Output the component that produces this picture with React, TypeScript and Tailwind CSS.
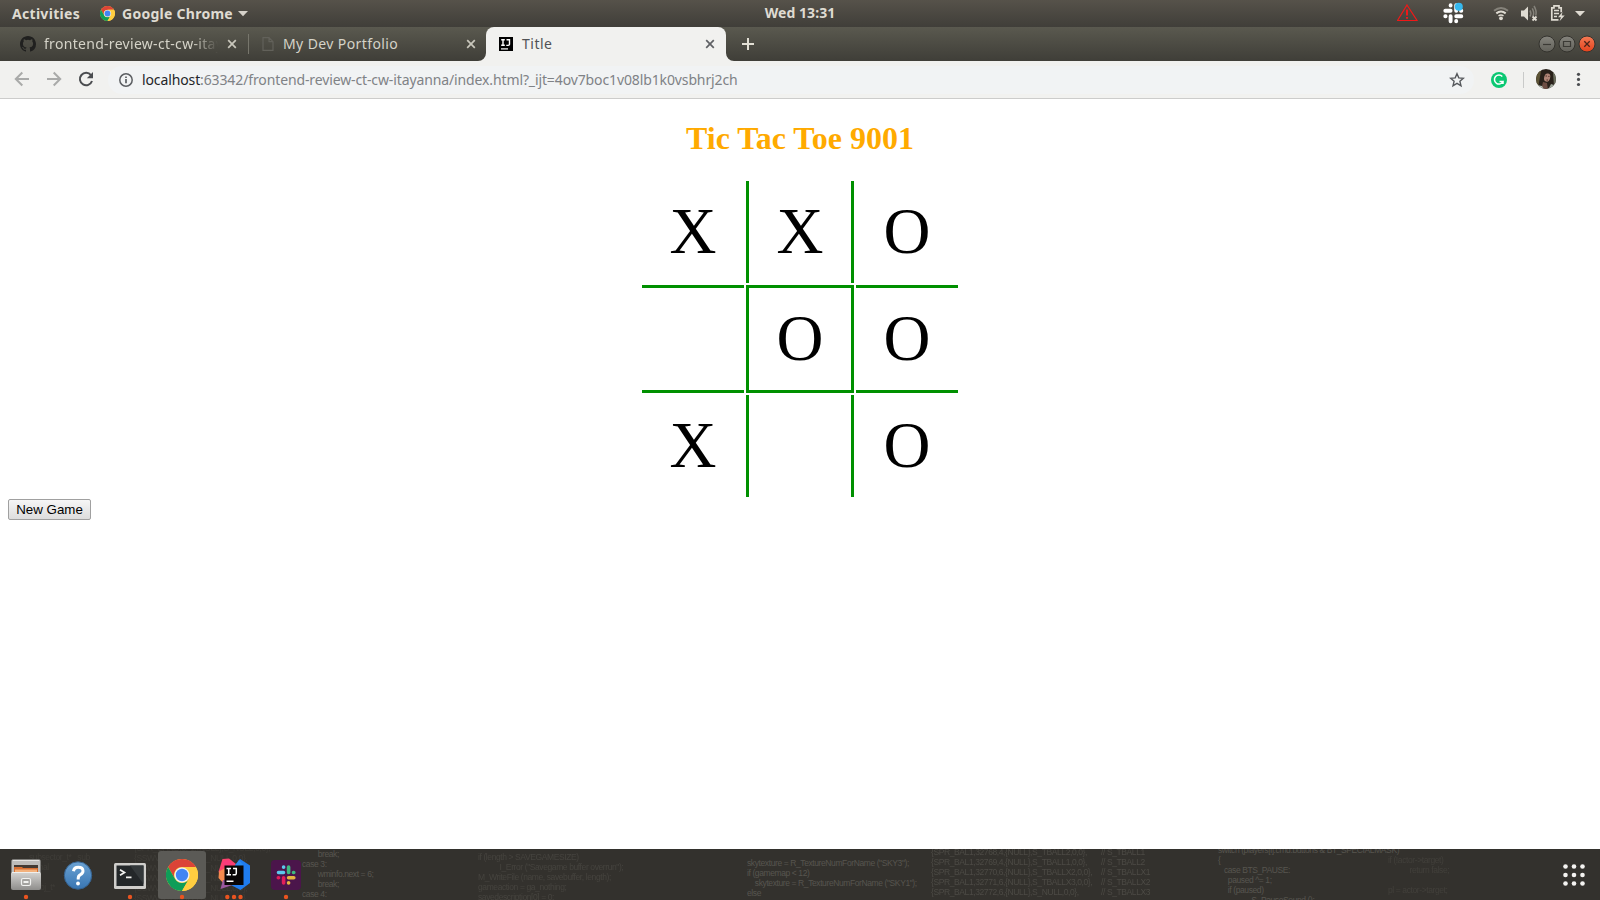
import type { ReactNode } from "react";

const ui = "font-['Noto_Sans','Open_Sans',sans-serif]";

function ChromeLogo({ size }: { size: number }) {
  return (
    <svg width={size} height={size} viewBox="-16 -16 32 32">
      <circle r="16" fill="#ffcd40" />
      <path d="M-13.86-8A16 16 0 0 1 13.86-8H0A8 8 0 0 0-6.93 4Z" fill="#db4437" />
      <path d="M-13.86-8-6.93 4A8 8 0 0 0 6.93 4L0 16A16 16 0 0 1-13.86-8Z" fill="#0f9d58" />
      <path d="M13.86-8H0A8 8 0 0 1 6.93 4L0 16A16 16 0 0 0 13.86-8Z" fill="#ffcd40" />
      <circle r="7.6" fill="#f1f1f1" />
      <circle r="6.2" fill="#4285f4" />
    </svg>
  );
}

function TopBar() {
  return (
    <div className="flex h-[27px] items-center justify-between bg-linear-to-b from-[#56524a] to-[#403e39] text-[14px] font-bold text-[#dfdbd2]">
      <div className="flex w-[700px] items-center pl-[12px]">
        <span className="w-[88px] tracking-[0.3px]">Activities</span>
        <ChromeLogo size={15} />
        <span className="ml-[7px] w-[112px] tracking-[0.27px] whitespace-nowrap">Google Chrome</span>
        <svg className="ml-[3px]" width="12" height="6" viewBox="0 0 12 6">
          <path d="M1 0h10L6 5.2Z" fill="#d6d2ca" />
        </svg>
      </div>
      <span className="mt-[-2px] tracking-[0.05px] whitespace-nowrap">Wed 13:31</span>
      <div className="flex w-[700px] justify-end">
        <svg width="203" height="27" viewBox="1397 0 203 27">
          <path d="M1407 5 1417 20.5H1397.5Z" fill="none" stroke="#f01818" strokeWidth="1.2" />
          <path d="M1407 9.5v6M1407 17v1.8" stroke="#f01818" strokeWidth="2" />
          <g stroke="#fff" strokeWidth="3.9" strokeLinecap="round" fill="none">
            <path d="M1450.600 5.300v.3M1445.300 10.700h5.300M1456.200 5.300v5.400M1461 10.700h.3M1456.200 16.200h5.100M1456.200 21v.3M1450.600 16.200v5.100M1445.300 16.200h.3" />
          </g>
          <circle cx="1458.8" cy="6.800" r="4" fill="#35b8ee" />
          <g fill="none" strokeWidth="2">
            <path d="M1494 10.7q7-5.5 14 0" stroke="#85827a" />
            <path d="M1496.3 13.4q4.700-3.700 9.400 0" stroke="#dfdbd2" />
            <path d="M1498.500 15.800q2.500-1.800 5 0" stroke="#dfdbd2" strokeWidth="1.500" />
          </g>
          <circle cx="1501" cy="18.300" r="1.900" fill="#dfdbd2" />
          <path d="M1521 10.500h3l4-4v14l-4-4h-3Z" fill="#dfdbd2" />
          <g fill="none" stroke="#85827a" strokeWidth="1.500">
            <path d="M1530 10.500q1.800 3 0 6M1532.300 8.300q2.500 5 .5 8M1534 6q3 5 1.800 9.500" />
          </g>
          <path d="m1532.500 16.500 4 4m0-4-4 4" stroke="#dfdbd2" strokeWidth="1.800" />
          <g fill="none" stroke="#dfdbd2" strokeWidth="1.700">
            <path d="M1558.500 19.800h-6.700V7.800h2.200v-2h5v2h2.200v4.500" />
            <path d="M1554 10.500h5M1554 13.500h5M1554 16.500h3" strokeWidth="1.500" />
          </g>
          <path d="m1562.500 12-4.500 5.200h3l-1.500 4 5.200-5.700h-3Z" fill="#dfdbd2" />
          <path d="M1575 11h10l-5 5.200Z" fill="#dfdbd2" />
        </svg>
      </div>
    </div>
  );
}

function Cross({ color }: { color: string }) {
  return (
    <svg width="10" height="10" viewBox="0 0 10 10" className="shrink-0">
      <path d="m1.200 1.200 7.600 7.600m0-7.600-7.600 7.600" stroke={color} strokeWidth="1.700" />
    </svg>
  );
}

function WindowButton({ close, children }: { close?: boolean; children: ReactNode }) {
  return (
    <svg width="18" height="18" viewBox="-9 -9 18 18">
      <defs>
        <linearGradient id={close ? "wc" : "wb"} x2="0" y2="1">
          <stop stopColor={close ? "#f47b55" : "#85847d"} />
          <stop offset="1" stopColor={close ? "#e4421c" : "#62615a"} />
        </linearGradient>
      </defs>
      <circle r="8" fill={close ? "url(#wc)" : "url(#wb)"} stroke="#34332e" />
      {children}
    </svg>
  );
}

function TabStrip() {
  return (
    <div className="flex h-[34px] bg-linear-to-b from-[#5a594f] to-[#3f3e38] text-[14px] text-[#d5d3c8]">
      <div className="flex w-[248px] items-center pl-[20px]">
        <svg width="16" height="16" viewBox="0 0 16 16" className="shrink-0">
          <path
            fill="#20201f"
            d="M8 0C3.580 0 0 3.580 0 8c0 3.540 2.290 6.530 5.470 7.590.4.070.55-.17.55-.38 0-.19-.01-.82-.01-1.490-2.010.37-2.530-.49-2.690-.94-.09-.23-.48-.94-.82-1.130-.28-.15-.68-.52-.01-.53.63-.01 1.080.58 1.230.82.72 1.210 1.870.87 2.330.66.07-.52.28-.87.51-1.070-1.780-.2-3.640-.89-3.640-3.950 0-.87.31-1.590.82-2.150-.08-.2-.36-1.020.08-2.120 0 0 .67-.21 2.200.82a7.600 7.600 0 0 1 4 0c1.530-1.040 2.200-.82 2.200-.82.44 1.100.16 1.920.08 2.120.51.56.82 1.270.82 2.150 0 3.070-1.870 3.750-3.650 3.950.29.25.54.73.54 1.480 0 1.070-.01 1.930-.01 2.200 0 .21.15.46.55.38A8 8 0 0 0 16 8c0-4.420-3.580-8-8-8Z"
          />
        </svg>
        <span className="mt-[-2px] ml-[8px] w-[174px] overflow-hidden mask-r-from-85% mask-r-to-100% tracking-[0.3px] whitespace-nowrap">
          frontend-review-ct-cw-itayanna
        </span>
        <span className="ml-[9px]">
          <Cross color="#c9c7bc" />
        </span>
      </div>
      <div className="flex w-[238px] items-center">
        <div className="h-[20px] w-px bg-[#77766c]" />
        <svg width="12" height="14" viewBox="0 0 12 14" className="ml-[13px]">
          <path d="M1 .7h6l4 4v8.600H1ZM7 .7v4h4" fill="none" stroke="#62615a" strokeWidth="1.200" />
        </svg>
        <span className="mt-[-2px] ml-[9px] w-[183px] tracking-[0.4px]">My Dev Portfolio</span>
        <Cross color="#c9c7bc" />
      </div>
      <div className="relative flex w-[240px] items-center rounded-t-[8px] bg-[#f1f1ef] text-[#505255]">
        <svg className="absolute bottom-0 -left-[8px]" width="8" height="8">
          <path d="M8 0A8 8 0 0 1 0 8H8Z" fill="#f1f1ef" />
        </svg>
        <svg className="absolute -right-[8px] bottom-0" width="8" height="8">
          <path d="M0 0A8 8 0 0 0 8 8H0Z" fill="#f1f1ef" />
        </svg>
        <svg width="14" height="14" viewBox="0 0 14 14" className="ml-[13px]">
          <path d="M0 0h14v14H0Z" />
          <path d="M2.200 2.700h3.600M4 2.700v5.600M2.200 8.300h3.600M7.500 2.700H10.500V7Q10.500 8.500 9 8.400H7.300" fill="none" stroke="#fff" strokeWidth="1.400" />
          <path d="M2 11.300h7v1.200H2Z" fill="#fff" />
        </svg>
        <span className="mt-[-2px] ml-[9px] w-[183px] tracking-[0.5px]">Title</span>
        <Cross color="#5f6165" />
      </div>
      <div className="flex flex-1 items-center justify-between pr-[4px]">
        <svg width="14" height="14" viewBox="0 0 14 14" className="ml-[15px]">
          <path d="M7 1v12M1 7h12" stroke="#e2dfd4" strokeWidth="2" />
        </svg>
        <div className="flex gap-[2px]">
          <WindowButton>
            <path d="M-4 .5h8" stroke="#3b3a35" strokeWidth="1.200" />
          </WindowButton>
          <WindowButton>
            <path d="M-3.500-2.500h7v5h-7Z" fill="none" stroke="#3b3a35" strokeWidth="1.200" />
          </WindowButton>
          <WindowButton close>
            <path d="m-2.700-2.700 5.400 5.400m0-5.400-5.400 5.400" stroke="#4b2419" strokeWidth="1.300" />
          </WindowButton>
        </div>
      </div>
    </div>
  );
}

function Toolbar() {
  return (
    <div className="flex h-[38px] items-center border-b border-[#cccccb] bg-[#f1f1ef]">
      <svg width="108" height="37" viewBox="0 61 108 37" fill="none" strokeWidth="2">
        <path d="M29 79H16M22.300 72.500 15.800 79l6.500 6.500" stroke="#a9aaa9" />
        <path d="M47 79h13M53.700 72.500 60.200 79l-6.500 6.500" stroke="#a9aaa9" />
        <path d="M91 75.200A6.200 6.200 0 1 0 92 81" stroke="#4b4d50" />
        <path d="M93 72v6.200h-6.200Z" fill="#4b4d50" />
      </svg>
      <div className="flex h-[28px] w-[1366px] items-center rounded-full bg-[#f1f3f4] pl-[11px]">
        <svg width="14" height="14" viewBox="0 0 14 14" fill="none" stroke="#5b5e62">
          <circle cx="7" cy="7" r="6.200" strokeWidth="1.500" />
          <path d="M7 6v4.300M7 3.400v1.600" strokeWidth="1.700" />
        </svg>
        <span className="ml-[9px] flex-1 text-[14px] tracking-[-0.12px] text-[#7f8286]">
          <span className="text-[#242528]">localhost</span>:63342/frontend-review-ct-cw-itayanna/index.html?_ijt=4ov7boc1v08lb1k0vsbhrj2ch
        </span>
        <svg width="16" height="16" viewBox="0 0 16 16" className="mr-[9px]">
          <path d="m8 1.700 1.800 4.200 4.600.4-3.500 3 1.100 4.500L8 11.400l-4 2.400 1.100-4.500-3.500-3 4.600-.4Z" fill="none" stroke="#55585c" strokeWidth="1.400" />
        </svg>
      </div>
      <svg width="126" height="37" viewBox="1474 61 126 37">
        <circle cx="1499" cy="80" r="8" fill="#0bc872" />
        <path d="M1502.300 76.500A4.500 4.500 0 1 0 1503 81.500H1499.500M1503 81.300V84" fill="none" stroke="#fff" strokeWidth="1.500" />
        <path d="M1523.500 72v16" stroke="#c9cac9" />
        <clipPath id="av"><circle cx="1546" cy="79" r="10" /></clipPath>
        <g clipPath="url(#av)">
          <path d="M1536 69h20v20h-20Z" fill="#29211a" />
          <path d="M1536 71h5l-3 17h-2Z" fill="#5c5335" />
          <path d="M1553 72l4 1v13l-3 1Z" fill="#6b6e5d" />
          <ellipse cx="1547.300" cy="77.500" rx="3" ry="4.200" fill="#b08577" transform="rotate(15 1547 77)" />
          <path d="M1543 82l4 1 1 7h-7Z" fill="#6d4d43" />
          <path d="M1537 85l5 1 2 4h-7Z" fill="#b6c3b9" />
          <path d="M1551 84l3 1-3 5h-3Z" fill="#9fa79b" />
          <path d="M1545.500 76h1.500m1.300.4h1.200M1546.500 80h1.500" stroke="#513027" />
        </g>
        <g fill="#4b4d50">
          <circle cx="1578.500" cy="74.300" r="1.600" />
          <circle cx="1578.500" cy="79.400" r="1.600" />
          <circle cx="1578.500" cy="84.500" r="1.600" />
        </g>
      </svg>
    </div>
  );
}

const cells = [
  ["X", ""],
  ["X", "border-x-[3px]"],
  ["O", ""],
  ["", "border-y-[3px]"],
  ["O", "border-[3px]"],
  ["O", "border-y-[3px]"],
  ["X", ""],
  ["", "border-x-[3px]"],
  ["O", ""],
];

function Game() {
  return (
    <main className="h-[750px] bg-white px-[8px] pt-[21px] font-['Liberation_Serif',serif] text-black">
      <h1 className="text-center text-[32px] leading-[37px] font-bold text-[#ffaa00]">Tic Tac Toe 9001</h1>
      <div className="mx-auto mt-[24px] grid w-[316px] grid-cols-[102px_108px_102px] grid-rows-[102px_108px_102px] gap-[2px]">
        {cells.map(([mark, edge], i) => (
          <div key={i} className={`flex items-center justify-center border-[#009000] pb-[2px] text-[65px] leading-[64px] ${edge}`}>
            {mark}
          </div>
        ))}
      </div>
      <button className="mt-[2px] flex h-[21px] w-[83px] items-center justify-center rounded-[2px] border border-[#a0a0a0] bg-linear-to-b from-[#f6f6f6] to-[#dddddd] font-['Liberation_Sans',sans-serif] text-[13.333px] whitespace-nowrap">
        New Game
      </button>
    </main>
  );
}

function DockItem({ dots = [], active, children }: { dots?: number[]; active?: boolean; children: ReactNode }) {
  return (
    <svg width="52" height="51" viewBox="0 0 52 51">
      {active && <rect x="2" y="2" width="48" height="48" rx="3" fill="#5b5a56" />}
      {children}
      {dots.map((x) => (
        <circle key={x} cx={x} cy="48" r="2.200" fill="#ea5420" />
      ))}
    </svg>
  );
}

const code: [string, string][] = [
  ["left-[29px] top-[3px] opacity-30", "subsector_t*   sub\nsignal\n\nmobj_t*"],
  ["left-[134px] top-[-6px] opacity-30", "{SPR_CAND,0,-1,{NULL},S_NULL,0,0},\n{SSWV,0,4,{NULL},S_NULL,0,0},\n{SSWV,1,4,{NULL},S_NULL,0,0},\n{SSWV,2,3,{NULL},S_NULL,0,0},\n{SSWV,3,3,{NULL},S_NULL,0,0},\n{SSWV,4,3,{NULL},S_NULL,0,0},"],
  ["left-[302px] top-[0px]", "        break;\ncase 3:\n        wminfo.next = 6;\n        break;\ncase 4:"],
  ["left-[478px] top-[3px] opacity-50", "if (length > SAVEGAMESIZE)\n           I_Error (\"Savegame buffer overrun\");\nM_WriteFile (name, savebuffer, length);\ngameaction = ga_nothing;\nsavedescription[0] = 0;"],
  ["left-[747px] top-[9px]", "skytexture = R_TextureNumForName (\"SKY3\");\nif (gamemap < 12)\n    skytexture = R_TextureNumForName (\"SKY1\");\nelse"],
  ["left-[931px] top-[-2px] opacity-70", "{SPR_BAL1,32768,4,{NULL},S_TBALL2,0,0},\n{SPR_BAL1,32769,4,{NULL},S_TBALL1,0,0},\n{SPR_BAL1,32770,6,{NULL},S_TBALLX2,0,0},\n{SPR_BAL1,32771,6,{NULL},S_TBALLX3,0,0},\n{SPR_BAL1,32772,6,{NULL},S_NULL,0,0},"],
  ["left-[1101px] top-[-2px] opacity-70", "// S_TBALL1\n// S_TBALL2\n// S_TBALLX1\n// S_TBALLX2\n// S_TBALLX3"],
  ["left-[1218px] top-[-4px]", "switch (players[i].cmd.buttons & BT_SPECIALMASK)\n{\n   case BTS_PAUSE:\n     paused ^= 1;\n     if (paused)\n                 S_PauseSound ();"],
  ["left-[1388px] top-[6px] opacity-40", "if (!actor->target)\n           return false;\n\npl = actor->target;"],
];

function Dock() {
  return (
    <div className="relative flex h-[51px] justify-between overflow-hidden bg-[#33312d]">
      <div className="absolute inset-0">
        {code.map(([place, text]) => (
          <pre key={place} className={`absolute font-['Liberation_Sans',sans-serif] text-[8.500px] leading-[10px] tracking-[-0.4px] text-[#57554f] ${place}`}>
            {text}
          </pre>
        ))}
      </div>
      <div className="relative flex">
        <DockItem dots={[26]}>
          <defs>
            <linearGradient id="cab" x2="0" y2="1">
              <stop stopColor="#d5d4d2" />
              <stop offset="1" stopColor="#8e8d8b" />
            </linearGradient>
          </defs>
          <rect x="11.500" y="10.500" width="29" height="18" rx="2" fill="#bdbcba" stroke="#7c7b78" />
          <path d="M12.500 11.500h27" stroke="#e4e3e1" />
          <path d="M14 16h24v8H14Z" fill="#443a33" />
          <path d="M14 18h8l1 1h15v5H14Z" fill="#d66f32" />
          <path d="M15 20.500h22v2.500H15Z" fill="#f3b17c" />
          <rect x="11" y="23" width="30" height="18" rx="2" fill="url(#cab)" />
          <path d="M12 23.500h28" stroke="#efefed" />
          <rect x="21.500" y="29.500" width="9" height="7" rx="1.500" fill="#a3a29f" stroke="#f2f2f0" strokeWidth="1.200" />
          <path d="M23.500 33h5" stroke="#f2f2f0" strokeWidth="2" />
        </DockItem>
        <DockItem>
          <defs>
            <linearGradient id="help" x2="0" y2="1">
              <stop stopColor="#6ba2d3" />
              <stop offset="1" stopColor="#3875b2" />
            </linearGradient>
          </defs>
          <circle cx="26" cy="26.500" r="13.700" fill="url(#help)" stroke="#35618e" />
          <path d="M21.500 22.200q.5-4 4.700-4 4.800 0 4.800 3.700 0 2.200-2.600 3.700-2.200 1.200-2.200 3.800v1" fill="none" stroke="#fff" strokeWidth="3" />
          <circle cx="26" cy="34.500" r="1.900" fill="#fff" />
        </DockItem>
        <DockItem dots={[26]}>
          <rect x="10" y="14" width="32" height="26" rx="1.500" fill="#cfcecb" />
          <path d="M12.500 16.500h27v20.500h-27Z" fill="#232729" />
          <path d="M26 16.500h13.500V35Z" fill="#33383a" />
          <path d="m16 20.800 4.500 2.700-4.500 2.700M22 28.300h5.500" fill="none" stroke="#f2f2f0" strokeWidth="1.700" />
        </DockItem>
        <DockItem dots={[26]} active>
          <g transform="translate(10 10)">
            <ChromeLogo size={32} />
          </g>
        </DockItem>
        <DockItem dots={[19.300, 26, 32.500]}>
          <path d="M14.500 10 21 9.500 28 15 22 36 10.500 23Z" fill="#fd426d" />
          <path d="M11 22.500 17 19v17L10.500 29Z" fill="#f58a4e" />
          <path d="M15 31h21L23 36.500 12.500 40Z" fill="#9a589f" />
          <path d="m32 10 10 6.500V34l-9.500 7L23 36l4-20Z" fill="#1f7cf0" />
          <path d="M20 10.500 26 15l-9 3-3-5Z" fill="#fb3b7b" />
          <path d="m31 11 4 5-8 1Z" fill="#2b8df0" />
          <path d="M16.500 16.500h19V36h-19Z" fill="#090607" />
          <path d="M18.500 19.500h4.500M20.700 19.500v6M18.500 25.700H23M25 19.500h3.300v4.600q0 1.800-1.700 1.700h-2" fill="none" stroke="#fff" strokeWidth="1.500" />
          <path d="M18.500 31.500h7V33h-7Z" fill="#fff" />
        </DockItem>
        <DockItem dots={[26]}>
          <rect x="11" y="11" width="30" height="30" rx="4" fill="#4b154b" />
          <g fill="none" strokeWidth="3.600" strokeLinecap="round">
            <path d="M18.500 23.500h5M23.600 18v.3" stroke="#5cc8ec" />
            <path d="M28.600 18v5.500M33.500 23.500h.3" stroke="#3db980" />
            <path d="M28.600 28.700h5.200M28.600 33.700v.3" stroke="#e7b440" />
            <path d="M23.600 28.700v5.300M18.300 28.700h.3" stroke="#e21e5a" />
          </g>
        </DockItem>
      </div>
      <svg className="relative" width="52" height="51" viewBox="0 0 52 51">
        {[17.500, 26, 34.500].map((y) =>
          [17.500, 26, 34.500].map((x) => <circle key={`${x}-${y}`} cx={x} cy={y} r="2.300" fill="#f4f3f1" />),
        )}
      </svg>
    </div>
  );
}

export default function App() {
  return (
    <div className={`flex h-[900px] w-[1600px] flex-col overflow-hidden bg-white ${ui}`}>
      <TopBar />
      <TabStrip />
      <Toolbar />
      <Game />
      <Dock />
    </div>
  );
}
